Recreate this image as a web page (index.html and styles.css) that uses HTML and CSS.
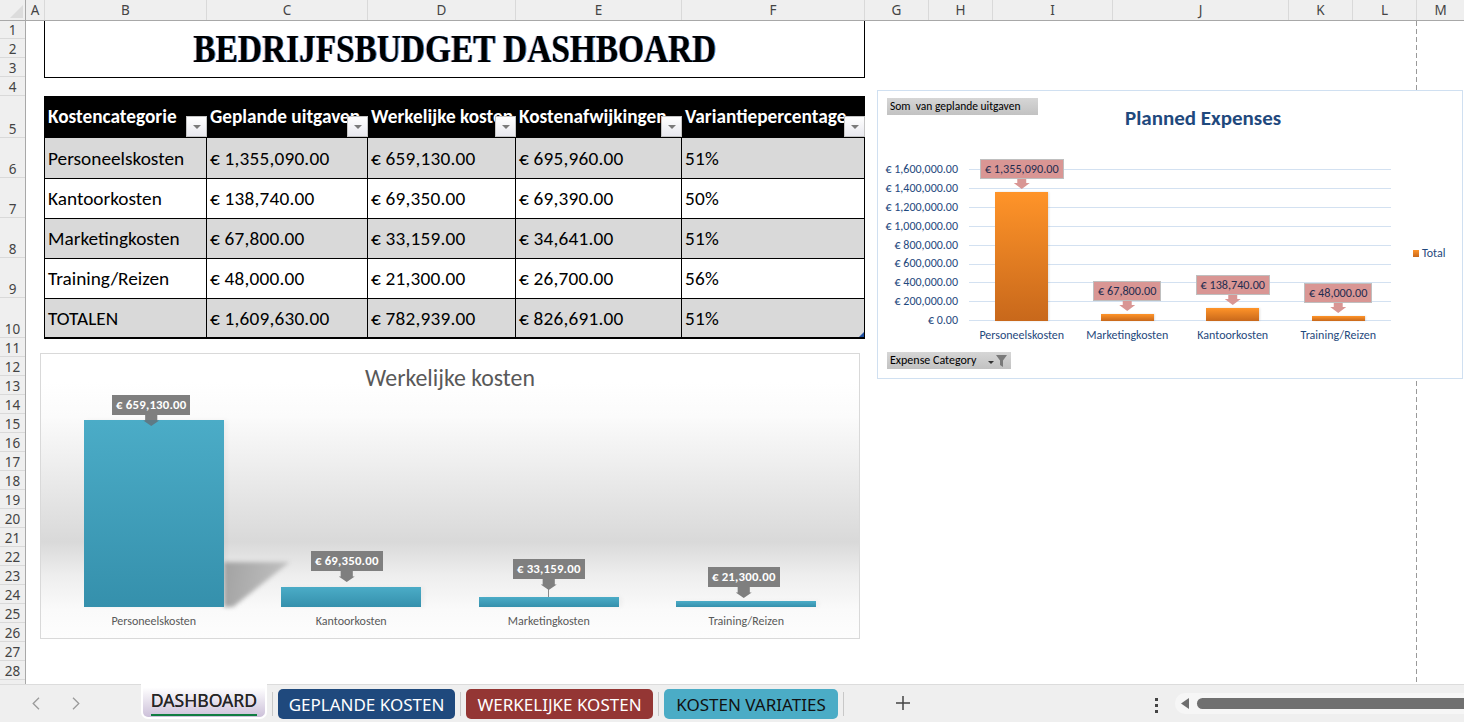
FILE: index.html
```html
<!DOCTYPE html>
<html lang="nl">
<head>
<meta charset="utf-8">
<title>Bedrijfsbudget Dashboard</title>
<link rel="stylesheet" href="styles.css">
</head>
<body>
<div class="app">
  <div class="colhead">
    <div class="corner"><i></i></div>
    <div>A</div><div>B</div><div>C</div><div>D</div><div>E</div><div>F</div><div>G</div><div>H</div><div>I</div><div>J</div><div>K</div><div>L</div><div class="last">M</div>
  </div>
  <div class="body">
    <div class="rowhead">
      <div class="r18">1</div><div>2</div><div>3</div><div>4</div><div class="r42">5</div><div class="r40">6</div><div class="r40">7</div><div class="r40">8</div><div class="r40">9</div><div class="r40">10</div>
      <div>11</div><div>12</div><div>13</div><div>14</div><div>15</div><div>16</div><div>17</div><div>18</div><div>19</div><div>20</div><div>21</div><div>22</div><div>23</div><div>24</div><div>25</div><div>26</div><div>27</div><div>28</div>
    </div>
    <div class="sheet">
      <div class="left">
        <div class="title-box"><h1>BEDRIJFSBUDGET DASHBOARD</h1></div>
        <table class="budget">
          <colgroup><col class="cb"><col class="cc"><col class="cd"><col class="ce"><col class="cf"></colgroup>
          <thead>
            <tr>
              <th>Kostencategorie<span class="filter"></span></th>
              <th>Geplande uitgaven<span class="filter"></span></th>
              <th>Werkelijke kosten<span class="filter"></span></th>
              <th>Kostenafwijkingen<span class="filter"></span></th>
              <th>Variantiepercentage<span class="filter"></span></th>
            </tr>
          </thead>
          <tbody>
            <tr class="alt first"><td>Personeelskosten</td><td>€ 1,355,090.00</td><td>€ 659,130.00</td><td>€ 695,960.00</td><td>51%</td></tr>
            <tr><td>Kantoorkosten</td><td>€ 138,740.00</td><td>€ 69,350.00</td><td>€ 69,390.00</td><td>50%</td></tr>
            <tr class="alt"><td>Marketingkosten</td><td>€ 67,800.00</td><td>€ 33,159.00</td><td>€ 34,641.00</td><td>51%</td></tr>
            <tr><td>Training/Reizen</td><td>€ 48,000.00</td><td>€ 21,300.00</td><td>€ 26,700.00</td><td>56%</td></tr>
            <tr class="alt total"><td>TOTALEN</td><td>€ 1,609,630.00</td><td>€ 782,939.00</td><td>€ 826,691.00</td><td class="handle-cell">51%<span class="handle"></span></td></tr>
          </tbody>
        </table>
        <section class="actual">
          <h2>Werkelijke kosten</h2>
          <div class="actual-plot">
            <div class="acol">
              <div class="tip shift-a"><span>€ 659,130.00</span><i class="over"></i></div>
              <div class="abar" style="height:187px"><div class="cast"></div></div>
            </div>
            <div class="acol">
              <div class="tip shift-b gap-5"><span>€ 69,350.00</span><i></i></div>
              <div class="abar" style="height:20px"></div>
            </div>
            <div class="acol">
              <div class="tip"><span>€ 33,159.00</span><i></i><b class="leader"></b></div>
              <div class="abar" style="height:10px"></div>
            </div>
            <div class="acol">
              <div class="tip shift-c gap-3"><span>€ 21,300.00</span><i></i></div>
              <div class="abar" style="height:6px"></div>
            </div>
          </div>
          <div class="acats"><span>Personeelskosten</span><span>Kantoorkosten</span><span>Marketingkosten</span><span>Training/Reizen</span></div>
        </section>
      </div>
      <section class="planned">
        <div class="planned-head">
          <div class="field field-top">Som&nbsp; van geplande uitgaven</div>
          <h2>Planned Expenses</h2>
        </div>
        <div class="planned-body">
          <div class="axis">
            <span>€ 1,600,000.00</span><span>€ 1,400,000.00</span><span>€ 1,200,000.00</span><span>€ 1,000,000.00</span><span>€ 800,000.00</span><span>€ 600,000.00</span><span>€ 400,000.00</span><span>€ 200,000.00</span><span>€ 0.00</span>
          </div>
          <div class="plot-col">
            <div class="plot">
              <div class="pcol"><div class="ptip"><span>€ 1,355,090.00</span><i></i></div><div class="pbar" style="height:129px"></div></div>
              <div class="pcol"><div class="ptip"><span>€ 67,800.00</span><i></i></div><div class="pbar" style="height:7px"></div></div>
              <div class="pcol"><div class="ptip"><span>€ 138,740.00</span><i></i></div><div class="pbar" style="height:13px"></div></div>
              <div class="pcol"><div class="ptip"><span>€ 48,000.00</span><i></i></div><div class="pbar" style="height:5px"></div></div>
            </div>
            <div class="pcats"><span>Personeelskosten</span><span>Marketingkosten</span><span>Kantoorkosten</span><span>Training/Reizen</span></div>
          </div>
          <div class="legend"><i></i><span>Total</span></div>
        </div>
        <div class="field field-bottom">
          <span>Expense Category</span>
          <svg class="drop" width="6" height="3" viewBox="0 0 6 3"><path d="M0 0h6L3 3z" fill="#333"/></svg>
          <svg class="funnel" width="11" height="12" viewBox="0 0 11 12"><path d="M0 0h11L7 5.5V12L4 10V5.5z" fill="#7a7a7a"/></svg>
        </div>
      </section>
    </div>
  </div>
  <div class="tabbar">
    <div class="nav">
      <svg width="8" height="13" viewBox="0 0 8 13"><path d="M7 .7 1.2 6.5 7 12.3" fill="none" stroke="#9a9a9a" stroke-width="1.3"/></svg>
      <svg width="8" height="13" viewBox="0 0 8 13"><path d="M1 .7 6.8 6.5 1 12.3" fill="none" stroke="#9a9a9a" stroke-width="1.3"/></svg>
    </div>
    <div class="tab active"><span>DASHBOARD</span></div>
    <i class="sep"></i>
    <div class="tab blue">GEPLANDE KOSTEN</div>
    <i class="sep"></i>
    <div class="tab red">WERKELIJKE KOSTEN</div>
    <i class="sep"></i>
    <div class="tab cyan">KOSTEN VARIATIES</div>
    <i class="sep"></i>
    <svg class="plus" width="14" height="14" viewBox="0 0 14 14"><path d="M7 0v14M0 7h14" stroke="#444" stroke-width="1.5"/></svg>
    <div class="dots"><i></i><i></i><i></i></div>
    <div class="scroll">
      <svg width="8" height="11" viewBox="0 0 8 11"><path d="M8 0v11L0 5.5z" fill="#6e6e6e"/></svg>
      <div class="thumb"></div>
    </div>
  </div>
</div>
</body>
</html>
```

FILE: styles.css
```css
* { box-sizing: border-box; }
html, body { margin: 0; padding: 0; }
body { width: 1464px; height: 722px; overflow: hidden; background: #fff; font-family: Carlito, Lato, "Liberation Sans", sans-serif; }
.app { width: 1464px; height: 722px; display: flex; flex-direction: column; overflow: hidden; }

/* column headings */
.colhead { height: 21px; flex: none; display: grid; grid-template-columns: 26px 19px 162px 161px 148px 166px 183px 64px 64px 120px 176px 64px 64px 47px; background: #efefef; border-bottom: 1px solid #a8a8a8; font: 13.5px/20px "Noto Sans", sans-serif; color: #444; text-align: center; }
.colhead > div { border-right: 1px solid #d9d9d9; }
.colhead > .last { border-right: 0; }
.corner { position: relative; border-right: 1px solid #a8a8a8 !important; }
.corner i { display: block; width: 13px; height: 13px; margin: 5px 0 0 10px; background: #dcdcdc; clip-path: polygon(100% 0, 100% 100%, 0 100%); }

/* row headings + sheet */
.body { flex: 1; display: flex; min-height: 0; }
.rowhead { width: 26px; flex: none; background: #efefef; border-right: 1px solid #a8a8a8; font: 13.5px/15px "Noto Sans", sans-serif; color: #444; text-align: center; overflow: hidden; }
.rowhead > div { height: 19px; display: flex; align-items: flex-end; justify-content: center; border-bottom: 1px solid #d9d9d9; }
.rowhead > .r18 { height: 18px; }
.rowhead > .r42 { height: 42px; }
.rowhead > .r40 { height: 40px; }

.sheet { flex: 1; position: relative; display: flex; align-items: flex-start; padding-left: 18px; background: #fff; }
.sheet::after { content: ""; position: absolute; left: 1390px; top: 0; bottom: 0; width: 1px; background: repeating-linear-gradient(to bottom, #999 0 5px, transparent 5px 8px); }
.left { width: 821px; flex: none; }

/* title */
.title-box { height: 57px; border: 1px solid #000; border-top: 0; display: flex; align-items: center; justify-content: center; overflow: hidden; }
h1 { margin: 0; font: bold 39px/44px "Liberation Serif", serif; color: #000; transform: scaleX(.855); letter-spacing: 0; text-shadow: 1px 0 0 #3f8fe0, -1px 0 0 rgba(160,40,40,.35); white-space: nowrap; }

/* table */
.budget { margin-top: 18px; width: 821px; table-layout: fixed; border-collapse: separate; border-spacing: 0; font-size: 19.3px; color: #000; }
.cb { width: 163px; } .cc { width: 161px; } .cd { width: 148px; } .ce { width: 166px; } .cf { width: 183px; }
.budget th { height: 42px; background: #000; color: #fff; font-weight: bold; text-align: left; padding: 0 0 1px 3px; position: relative; white-space: nowrap; overflow: hidden; }
.budget td { height: 40px; padding: 0 0 0 3px; border-right: 1px solid #000; border-bottom: 1px solid #000; white-space: nowrap; overflow: hidden; position: relative; letter-spacing: .2px; }
.budget td:first-child { border-left: 1px solid #000; padding-left: 3px; letter-spacing: 0; }
.budget th:first-child { padding-left: 4px; }
.budget .first td { height: 41px; }
.budget .alt td { background: #d9d9d9; }
.budget .total td { height: 40px; border-bottom-width: 2px; }
.filter { position: absolute; right: 0; bottom: 1px; width: 21px; height: 21px; background: linear-gradient(#fff, #e9e9ef); border: 1px solid #c4c4c4; }
.filter::after { content: ""; position: absolute; left: 6px; top: 8px; border: 4px solid transparent; border-top: 4px solid #7a7a7a; border-bottom: 0; }
.handle { position: absolute; right: 0; bottom: 0; width: 5px; height: 5px; background: #1f4fa0; clip-path: polygon(100% 0, 100% 100%, 0 100%); }

/* actual-cost chart */
.actual { margin: 14px 0 0 -4px; width: 820px; height: 286px; border: 1px solid #d9d9d9; background: linear-gradient(to bottom, #fff 0, #fff 10%, #fbfbfb 22%, #d9d9d9 66%, #eeeeee 78%, #fafafa 90%, #fdfdfd 100%); }
.actual h2 { margin: 0; height: 40px; padding-top: 11px; font-size: 23.8px; line-height: 26px; font-weight: normal; color: #595959; text-align: center; }
.actual-plot { height: 213px; margin: 0 14px; display: grid; grid-template-columns: repeat(4, 1fr); isolation: isolate; }
.acol { display: flex; flex-direction: column; justify-content: flex-end; align-items: center; min-width: 0; }
.abar { width: 140px; flex: none; background: linear-gradient(#4bacc7, #3590ac); position: relative; box-shadow: 3px 0 5px rgba(0,0,0,.04); }
.cast { position: absolute; z-index: -1; left: 100%; bottom: 0; width: 66px; height: 45px; filter: blur(2px); }
.cast::before { content: ""; display: block; width: 100%; height: 100%; background: linear-gradient(100deg, #a2a2a2, #c4c4c4); clip-path: polygon(0 0, 100% 0, 14% 100%, 0 100%); }
.tip { display: flex; flex-direction: column; align-items: center; margin-bottom: -6px; position: relative; z-index: 1; }
.tip span { height: 20px; padding: 0 4px; background: #7f7f7f; color: #fff; font-size: 12.8px; line-height: 20px; font-weight: bold; white-space: nowrap; letter-spacing: .2px; }
.tip i { display: block; width: 16px; height: 11px; background: #7f7f7f; clip-path: polygon(12% 0, 88% 0, 88% 50%, 100% 50%, 50% 100%, 0 50%, 12% 50%); }
.tip i.over { background: linear-gradient(#7f7f7f 50%, #5e7a86 50%); }
.tip .leader { display: block; width: 1px; height: 8px; margin-top: -1px; background: #8a8a8a; }
.tip:not(.shift-a):not(.gap-5):not(.gap-3) { margin-bottom: 0; }
.shift-a { margin-right: 5px; }
.shift-b { margin-right: 9px; }
.shift-c { margin-right: 5px; }
.gap-5 { margin-bottom: 5px; }
.gap-3 { margin-bottom: 3px; }
.acats { display: grid; grid-template-columns: repeat(4, 1fr); margin: 0 14px; padding-top: 7px; font-size: 12px; line-height: 15px; color: #595959; text-align: center; }

/* planned chart */
.planned { flex: none; width: 586px; height: 289px; margin: 69px 0 0 12px; padding-left: 9px; border: 1px solid #d0e0f1; background: #fff; position: relative; z-index: 1; }
.planned-head { height: 69px; display: flex; align-items: flex-start; padding-top: 7px; }
.planned-head h2 { margin: 7px 0 0 87px; font-size: 21px; line-height: 26px; font-weight: bold; color: #1f497d; white-space: nowrap; }
.field { height: 17px; font-size: 11.5px; line-height: 17px; color: #000; background: linear-gradient(#d6d6d6, #c2c2c2); padding-left: 3px; white-space: nowrap; }
.field-top { width: 151px; flex: none; }
.field-bottom { width: 124px; display: flex; align-items: center; position: relative; font-size: 12px; }
.field-bottom .drop { margin: 4px 0 0 auto; }
.field-bottom .funnel { margin: 0 4px 0 2px; }
.planned-body { height: 192px; display: flex; margin-left: -9px; }
.axis { width: 80px; flex: none; display: flex; flex-direction: column; font-size: 12px; color: #1f497d; text-align: right; }
.axis span { height: 18.9px; line-height: 18px; }
.plot-col { width: 422px; flex: none; margin: 9px 0 0 11px; }
.plot { height: 152px; display: grid; grid-template-columns: repeat(4, 1fr); grid-template-rows: 152px; background: repeating-linear-gradient(to bottom, #d3e1f1 0 1px, transparent 1px 18.9px); }
.pcol { display: flex; flex-direction: column; justify-content: flex-end; align-items: center; min-width: 0; height: 152px; }
.pbar { width: 53px; flex: none; background: linear-gradient(#ff9429, #c8681b); box-shadow: 1px 0 2px rgba(0,0,0,.12); }
.ptip { display: flex; flex-direction: column; align-items: center; margin-bottom: 3px; flex: none; }
.ptip span { height: 20px; padding: 0 4px; background: #d99694; border: 1px solid #bfbfbf; color: #1f2d50; font-size: 12.2px; line-height: 18px; white-space: nowrap; }
.ptip i { display: block; width: 16px; height: 10px; background: #d99694; clip-path: polygon(22% 0, 78% 0, 78% 40%, 100% 40%, 50% 100%, 0 40%, 22% 40%); }
.pcats { display: grid; grid-template-columns: repeat(4, 1fr); padding-top: 7px; font-size: 12px; line-height: 15px; color: #1f497d; text-align: center; }
.legend { display: flex; align-items: center; gap: 3px; height: 16px; margin: 85px 0 0 22px; font-size: 12px; color: #1f497d; }
.legend i { width: 6px; height: 7px; background: linear-gradient(#ff9429, #c8681b); }

/* tabs */
.tabbar { height: 38px; flex: none; display: flex; align-items: flex-start; background: #efefef; border-top: 1px solid #dcdcdc; font-family: "Noto Sans", sans-serif; font-size: 17px; }
.nav { width: 141px; flex: none; display: flex; gap: 32px; padding: 12px 0 0 32px; }
.tab { height: 30px; flex: none; border-radius: 5px; margin-top: 4px; display: flex; align-items: center; justify-content: center; white-space: nowrap; }
.tab.active { width: 126px; height: 35px; margin-top: -1px; border: 2px solid #fff; border-top: 0; border-radius: 0 0 7px 7px; background: linear-gradient(#fff 10%, #ccc0d9 100%); color: #262626; align-items: flex-start; padding-top: 3px; font-size: 17.6px; }
.tab.active span { border-bottom: 2px solid #107c41; line-height: 27px; height: 29px; display: block; text-shadow: 0 0 .5px #262626; }
.sep { width: 1px; height: 24px; margin: 7px 5px 0; background: #c8c8c8; flex: none; }
.tab.blue { width: 177px; background: #1f497d; color: #fff; }
.tab.red { width: 187px; background: #943634; color: #fff; }
.tab.cyan { width: 174px; background: #4bacc6; color: #111; }
.plus { margin: 11px 0 0 47px; flex: none; }
.dots { margin: 13px 0 0 245px; display: flex; flex-direction: column; gap: 3px; flex: none; }
.dots i { width: 3px; height: 3px; background: #444; display: block; }
.scroll { flex: 1; height: 21px; margin: 8px 0 0 17px; background: #f6f6f6; border-radius: 10px 0 0 10px; display: flex; align-items: center; padding-left: 6px; }
.thumb { flex: 1; height: 11px; margin-left: 8px; background: #707070; border-radius: 6px 0 0 6px; }
```
